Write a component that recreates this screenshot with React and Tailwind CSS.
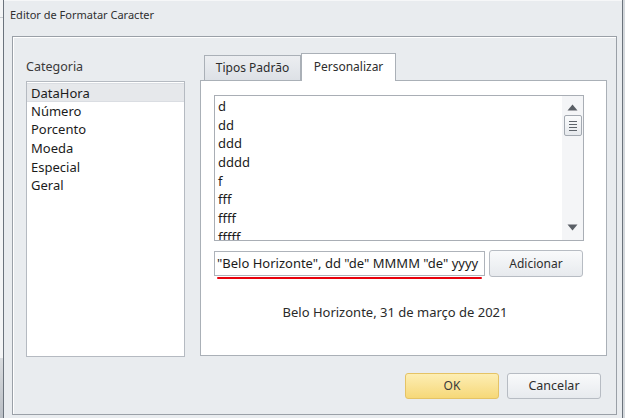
import React from "react";

const ListItem = ({ children, selected }) => (
  <div
    className={
      "h-[18.7px] leading-[18.7px] pl-[4px] " +
      (selected ? "bg-[#e6e8eb] border-y border-[#dadde2] leading-[16.7px]" : "")
    }
  >
    {children}
  </div>
);

export default function App() {
  const formats = ["d", "dd", "ddd", "dddd", "f", "fff", "ffff", "fffff"];
  return (
    <div className="w-[625px] h-[418px] overflow-hidden bg-white flex text-[12px] text-[#1b1b1b] font-['Noto_Sans',sans-serif]">
      {/* background strip */}
      <div className="w-[3px] flex flex-col bg-[#f4f5f6]">
        <div className="h-[17px]" />
        <div className="h-px bg-[#c8ccd0]" />
        <div className="flex-1" />
        <div className="h-[60px] bg-gradient-to-b from-[#d9dcdf] to-[#b9bec4]" />
      </div>
      {/* window */}
      <div className="flex-1 flex flex-col border-x border-[#6b737c] bg-[#e9ecef]">
        <div className="h-[1px] bg-[#f6f7f8]" />
        <div className="h-[35px] flex items-center pl-[6px] pb-[6px] text-[11px] text-[#2f2f2f]">
          Editor de Formatar Caracter
        </div>
        <div className="flex-1 ml-[8px] mr-[5px] mb-[3px] border border-[#9aa0a7] shadow-[inset_1px_1px_0_#ffffff] flex flex-col">
          <div className="flex pt-[16px]">
            {/* left column */}
            <div className="ml-[13px] w-[159px] flex flex-col">
              <div className="h-[16px] mt-[6px] leading-[16px] text-[12.5px] text-[#3a3a3a]">Categoria</div>
              <div className="mt-[6px] h-[276px] bg-white border border-[#b5bac1] pt-px text-[13px]">
                <ListItem selected>DataHora</ListItem>
                <ListItem>Número</ListItem>
                <ListItem>Porcento</ListItem>
                <ListItem>Moeda</ListItem>
                <ListItem>Especial</ListItem>
                <ListItem>Geral</ListItem>
              </div>
            </div>
            {/* right column: tabs */}
            <div className="ml-[15px] w-[407px] flex flex-col">
              <div className="h-[27px] flex items-end pl-[4px]">
                <div className="h-[25px] w-[97px] flex items-center justify-center border border-b-0 border-[#aab0b7] bg-gradient-to-b from-[#eceef1] to-[#dde1e6] text-[#2d2d2d]">
                  Tipos Padrão
                </div>
                <div className="h-[28px] w-[95px] -mb-px relative z-10 flex items-center justify-center border border-b-0 border-[#aab0b7] bg-white text-[#2d2d2d] pb-[2px]">
                  Personalizar
                </div>
              </div>
              <div className="h-[276px] bg-white border border-[#aab0b7] flex flex-col pl-[13px] pr-[22px] pt-[14px]">
                {/* format list */}
                <div className="h-[146px] border border-[#a9aeb5] flex">
                  <div className="flex-1 overflow-hidden pl-[3px] pt-[1px] text-[13px]">
                    {formats.map((f) => (
                      <div key={f} className="h-[18.7px] leading-[18.7px]">{f}</div>
                    ))}
                  </div>
                  <div className="w-[21px] bg-[#f4f5f7] flex flex-col items-center">
                    <svg width="11" height="7" className="mt-[8px]" viewBox="0 0 11 7">
                      <path d="M0.5 6.5 L5.5 0.5 L10.5 6.5 Z" fill="#5a5f66" />
                    </svg>
                    <div className="mt-[4px] w-[18px] h-[21px] border border-[#a3a9b1] rounded-[2px] bg-gradient-to-b from-[#fafbfc] to-[#e6e9ed] flex flex-col items-center justify-center gap-[2px]">
                      <div className="w-[8px] h-px bg-[#5e646b]" />
                      <div className="w-[8px] h-px bg-[#5e646b]" />
                      <div className="w-[8px] h-px bg-[#5e646b]" />
                      <div className="w-[8px] h-px bg-[#5e646b]" />
                    </div>
                    <div className="flex-1" />
                    <svg width="11" height="7" className="mb-[9px]" viewBox="0 0 11 7">
                      <path d="M0.5 0.5 L5.5 6.5 L10.5 0.5 Z" fill="#5a5f66" />
                    </svg>
                  </div>
                </div>
                {/* input row */}
                <div className="mt-[9px] flex items-start">
                  <div className="relative">
                    <div className="mt-px w-[271px] h-[25px] border border-[#aeb3ba] bg-white flex items-center pl-[2px] whitespace-nowrap overflow-hidden text-[13px] text-[#1b1b1b]">
                      "Belo Horizonte", dd "de" MMMM "de" yyyy
                    </div>
                    <div className="absolute left-[3px] top-[27px] w-[265px] h-[2px] bg-[#e8000b] rounded-full" />
                  </div>
                  <div className="ml-[4px] w-[94px] h-[27px] border border-[#b7bcc3] rounded-[3px] bg-gradient-to-b from-[#f9fafb] to-[#e7eaee] flex items-center justify-center text-[#2d2d2d]">
                    Adicionar
                  </div>
                </div>
                <div className="mt-[26px] text-center pr-[8px] text-[13px] text-[#2a2a2a]">
                  Belo Horizonte, 31 de março de 2021
                </div>
              </div>
            </div>
          </div>
          {/* buttons */}
          <div className="flex justify-end gap-[8px] pr-[15px] mt-[16px]">
            <div className="w-[94px] h-[26px] border border-[#e5c365] rounded-[3px] bg-gradient-to-b from-[#fdeeb3] to-[#f6d878] flex items-center justify-center text-[#3a3a3a]">
              OK
            </div>
            <div className="w-[94px] h-[26px] border border-[#b7bcc3] rounded-[3px] bg-gradient-to-b from-[#f9fafb] to-[#e7eaee] flex items-center justify-center text-[12.5px] text-[#2d2d2d]">
              Cancelar
            </div>
          </div>
        </div>
      </div>
      <div className="w-[2px] bg-[#d5d9dd]" />
    </div>
  );
}
